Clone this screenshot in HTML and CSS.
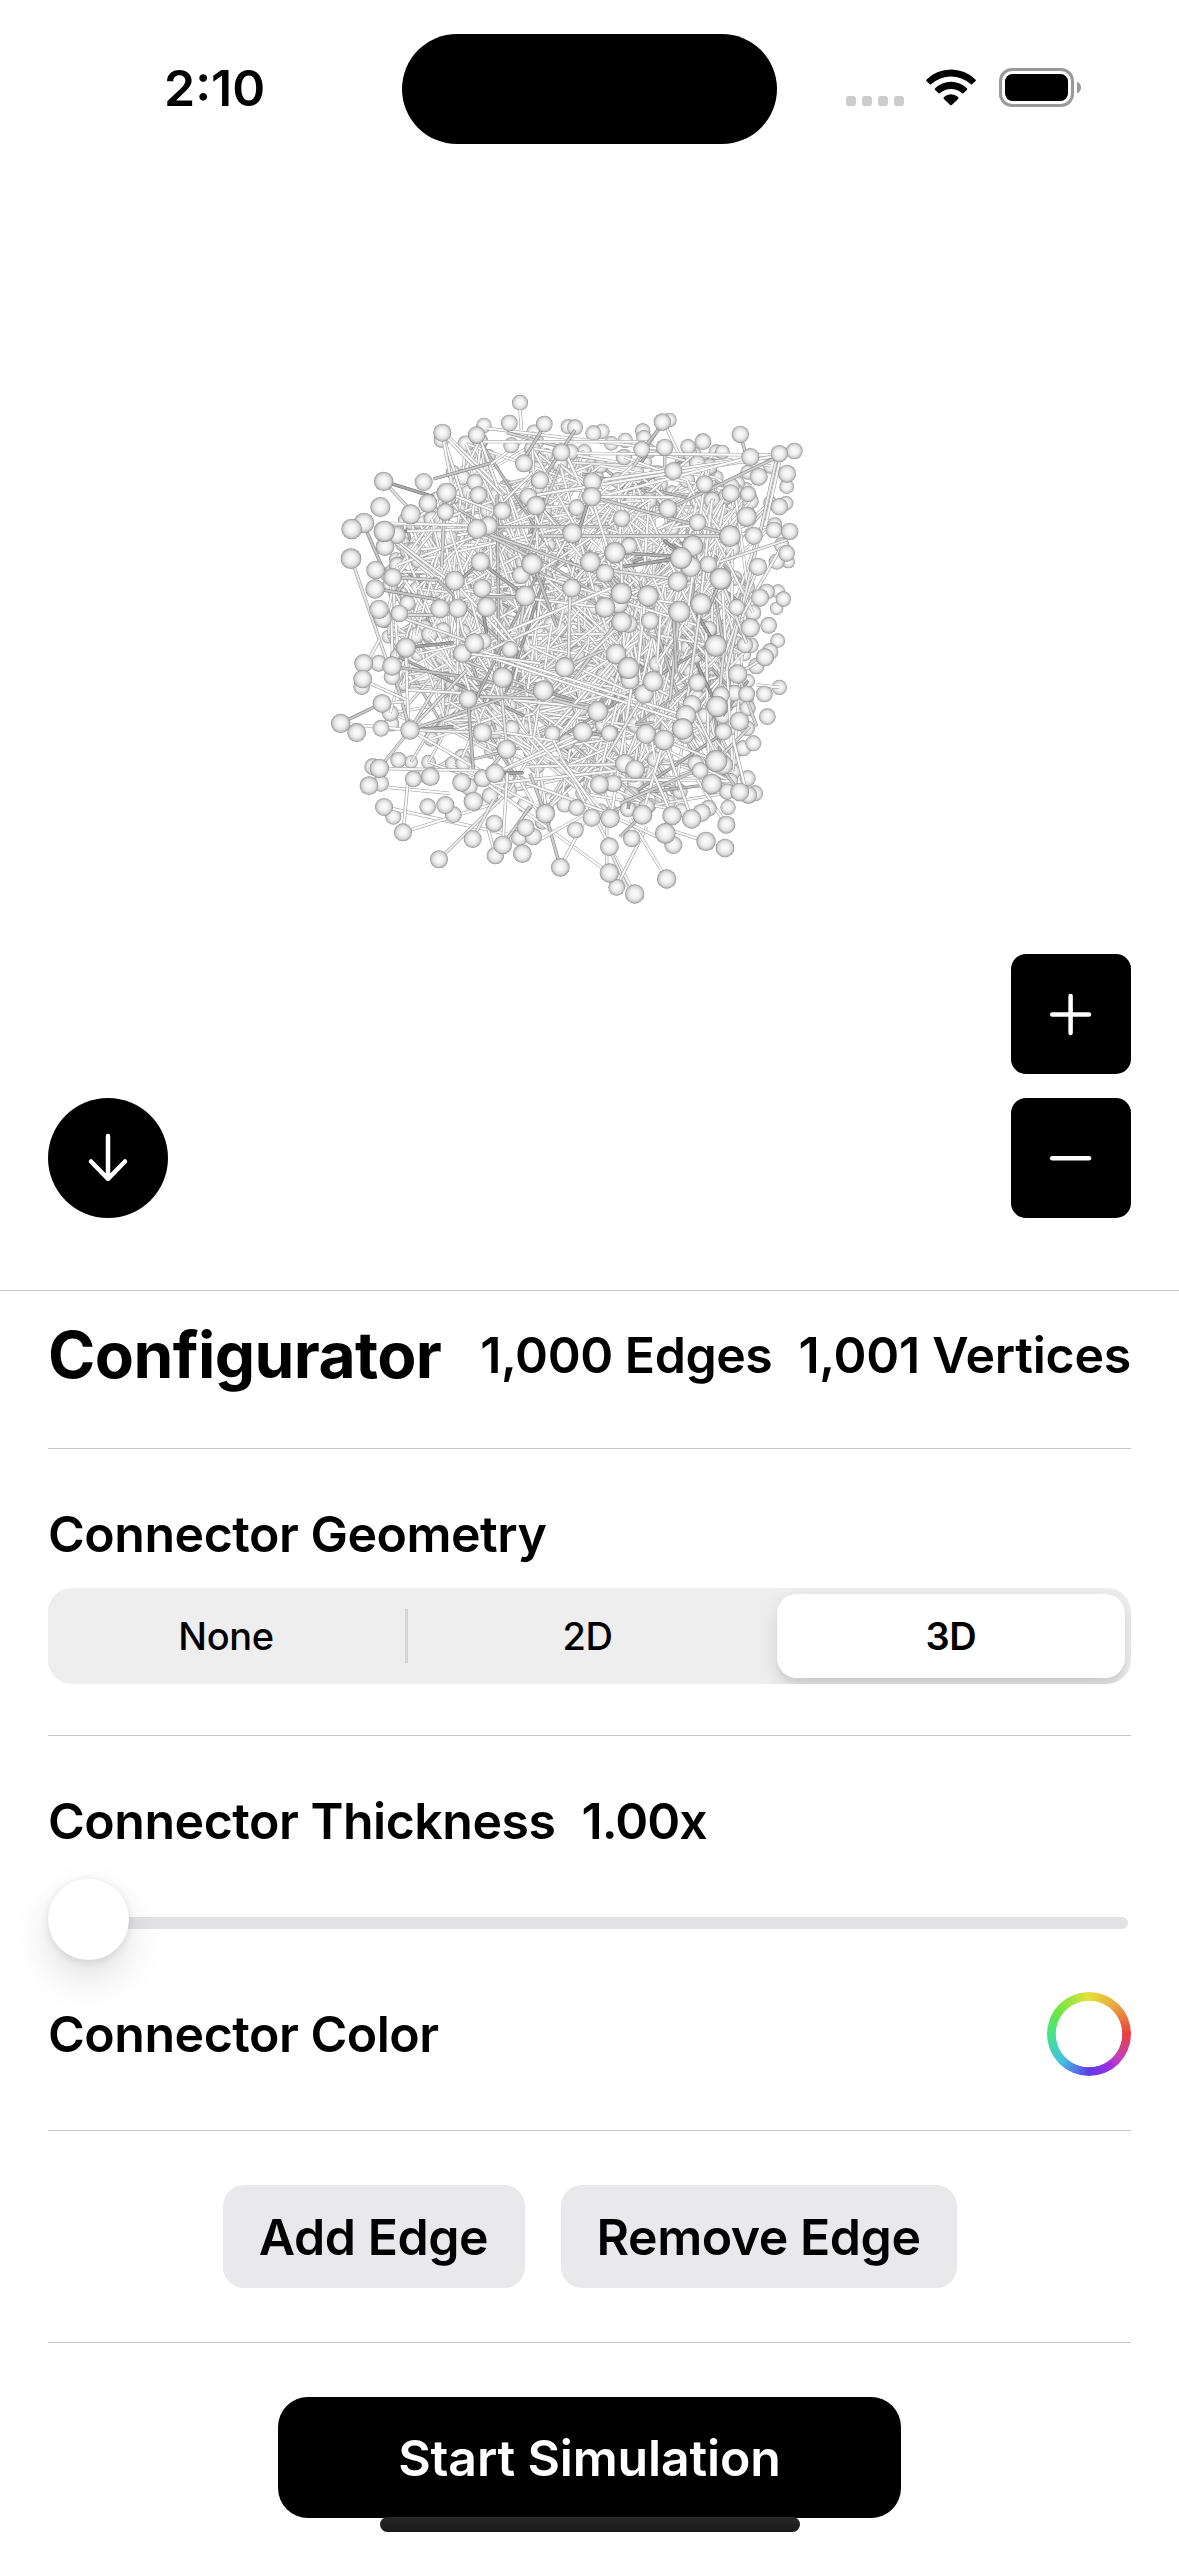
FILE: index.html
```html
<!DOCTYPE html>
<html lang="en">
<head>
<meta charset="utf-8">
<title>Configurator</title>
<link rel="stylesheet" href="styles.css">
</head>
<body>
<header class="status">
  <div class="clock">2:10</div>
  <div class="island"></div>
  <div class="indicators">
    <div class="signal"><i></i><i></i><i></i><i></i></div>
    <svg class="wifi" width="52" height="38" viewBox="0 0 52 38">
      <path d="M1.6 11.4 A35 35 0 0 1 50.4 11.4 Q51.4 12.2 50.6 13 L47.2 16.2 Q46.5 16.8 45.6 16.1 A29 29 0 0 0 6.4 16.1 Q5.5 16.8 4.8 16.2 L1.4 13 Q0.6 12.2 1.6 11.4 Z"/>
      <path d="M10.2 20.2 A22.5 22.5 0 0 1 41.8 20.2 Q42.7 21.1 41.9 21.9 L38.4 25.2 Q37.7 25.8 36.8 25.1 A16.5 16.5 0 0 0 15.2 25.1 Q14.3 25.8 13.6 25.2 L10.1 21.9 Q9.3 21.1 10.2 20.2 Z"/>
      <path d="M19 29 A10.5 10.5 0 0 1 33 29 Q34 30 33.1 30.9 L26.8 37 Q26 37.7 25.2 37 L18.9 30.9 Q18 30 19 29 Z"/>
    </svg>
    <svg class="battery" width="84" height="40" viewBox="0 0 84 40">
      <rect x="1.5" y="1.5" width="72" height="36" rx="11.5" fill="none" stroke="#999" stroke-width="3"/>
      <rect x="6" y="6" width="63" height="27" rx="7.5"/>
      <path d="M78 13.5 Q82 15.5 82 19.5 Q82 23.5 78 25.5 Z" fill="#999"/>
    </svg>
  </div>
</header>

<main class="viewer">
  <canvas class="graph" id="graph" width="500" height="560"></canvas>
  <div class="controls">
    <button class="round" aria-label="Collapse">
      <svg width="120" height="120" viewBox="0 0 120 120"><path d="M60 38 V80.5 M43 63.5 L60 80.8 L77 63.5"/></svg>
    </button>
    <div class="zoom">
      <button class="square" aria-label="Zoom in">
        <svg width="120" height="120" viewBox="0 0 120 120"><path d="M41.2 60.4 H78 M59.6 42 V79"/></svg>
      </button>
      <button class="square" aria-label="Zoom out">
        <svg width="120" height="120" viewBox="0 0 120 120"><path d="M41.2 60.2 H78"/></svg>
      </button>
    </div>
  </div>
</main>

<section class="panel">
  <div class="row title">
    <h1>Configurator</h1>
    <div class="counts"><span class="edge-count">1,000 Edges</span><span class="vertex-count">1,001 Vertices</span></div>
  </div>
  <div class="row geometry">
    <h2>Connector Geometry</h2>
    <div class="segmented">
      <span class="segment">None</span><span class="segment">2D</span><span class="segment selected">3D</span>
    </div>
  </div>
  <div class="row appearance">
    <div class="label"><h2>Connector Thickness</h2><span class="value">1.00x</span></div>
    <div class="slider"><span class="track"></span><span class="thumb"></span></div>
    <div class="color"><h2>Connector Color</h2><span class="well"></span></div>
  </div>
  <div class="row edges">
    <button class="soft add">Add Edge</button>
    <button class="soft remove">Remove Edge</button>
  </div>
  <div class="start-row">
    <button class="start">Start Simulation</button>
    <div class="home"></div>
  </div>
</section>
<script src="graph.js"></script>
</body>
</html>
```
FILE: styles.css
```css
* { box-sizing: border-box; }

body {
  margin: 0;
  width: 1179px;
  height: 2556px;
  overflow: hidden;
  background: #fff;
  color: #000;
  font-family: Inter, "Liberation Sans", sans-serif;
  font-size: 50px;
  font-weight: 600;
  line-height: 60px;
  display: flex;
  flex-direction: column;
}

h1, h2 { margin: 0; font-size: inherit; font-weight: inherit; white-space: nowrap; }
h2 { letter-spacing: -0.48px; }

button {
  border: 0;
  padding: 0;
  font: inherit;
  color: inherit;
  display: flex;
  align-items: center;
  justify-content: center;
}

/* Status bar */
.status {
  height: 177px;
  padding-top: 34px;
  display: grid;
  grid-template-columns: 402px 375px 402px;
  grid-template-rows: 110px;
}
.clock { padding: 24px 0 0 164px; }
.island { background: #000; border-radius: 55px; }
.indicators { display: flex; padding: 34px 0 0 69px; align-items: flex-start; }
.signal { display: flex; gap: 6px; margin: 28px 21px 0 0; }
.signal i { width: 10px; height: 10px; border-radius: 3px; background: #ccc; }
.wifi { margin-right: 22px; }

/* Graph viewer */
.viewer { height: 1113px; padding: 203px 48px 0; display: flex; flex-direction: column; }
.graph { margin-left: 272px; width: 500px; height: 560px; }
.controls { margin-top: 14px; display: flex; justify-content: space-between; align-items: flex-end; }
.zoom { display: flex; flex-direction: column; gap: 24px; }
.round, .square { width: 120px; height: 120px; background: #000; }
.round { border-radius: 50%; }
.square { border-radius: 15px; }
.controls path { fill: none; stroke: #fff; stroke-width: 4.5; stroke-linecap: round; stroke-linejoin: round; }

/* Configurator panel */
.panel { border-top: 1px solid #c6c6c6; padding: 0 48px; }
.row { border-bottom: 1px solid #c6c6c6; }
.title { height: 158px; padding-top: 24px; display: flex; justify-content: space-between; }
h1 { font-size: 64px; font-weight: 700; line-height: 80px; letter-spacing: -0.6px; }
.counts { display: flex; gap: 26px; padding-top: 10px; line-height: 60px; }
.edge-count { letter-spacing: -0.45px; }
.vertex-count { letter-spacing: -0.25px; }
.geometry { height: 287px; padding-top: 55px; }
.segmented {
  height: 96px;
  margin-top: 24px;
  padding: 6px;
  display: grid;
  grid-template-columns: 344px 348px 348px;
  justify-content: space-between;
  border-radius: 24px;
  background: #eee;
  overflow: hidden;
  font-size: 38px;
  font-weight: 500;
  letter-spacing: -0.4px;
}
.segment { display: flex; align-items: center; justify-content: center; position: relative; }
.segment:first-child::after {
  content: "";
  position: absolute;
  right: -10px;
  top: 15px;
  width: 3px;
  height: 54px;
  background: #d5d5d5;
}
.segment.selected {
  background: #fff;
  border-radius: 20px;
  font-weight: 600;
  box-shadow: 0 8px 20px rgba(0,0,0,.12), 0 6px 3px rgba(0,0,0,.04);
}
.appearance { height: 395px; padding-top: 55px; }
.label { display: flex; gap: 26px; }
.value { letter-spacing: -1px; }
.slider { height: 81px; margin-top: 28px; display: flex; align-items: center; position: relative; }
.track { flex: none; width: 1080px; height: 12px; margin-top: 7px; border-radius: 6px; background: #e3e3e5; }
.thumb {
  position: absolute;
  left: 0;
  width: 81px;
  height: 81px;
  border-radius: 50%;
  background: #fff;
  box-shadow: 0 18px 39px rgba(0,0,0,.13), 0 2px 8px rgba(0,0,0,.1);
}
.color { margin-top: 32px; height: 84px; display: flex; justify-content: space-between; align-items: center; }
.well {
  width: 84px;
  height: 84px;
  border-radius: 50%;
  background:
    radial-gradient(circle, #fff 32.8px, transparent 33.6px),
    conic-gradient(#e6e03c, #e8a33e 45deg, #e9403f 90deg, #c23fc0 130deg, #a32fdd 145deg, #5f3de8 180deg, #46c0e0 225deg, #42e58d 270deg, #6ee540 305deg, #a9e53f 335deg, #e6e03c);
}
.edges { height: 212px; display: flex; justify-content: center; align-items: center; gap: 36px; }
.soft { height: 103px; border-radius: 21px; background: #e9e9eb; letter-spacing: -0.45px; }
.add { width: 302px; }
.remove { width: 396px; }
.start-row { padding-top: 54px; display: flex; flex-direction: column; align-items: center; }
.start { width: 623px; height: 121px; border-radius: 30px; background: #000; color: #fff; letter-spacing: -0.15px; }
.home { width: 420px; height: 15px; margin-top: -1px; border-radius: 8px; background: linear-gradient(#282828, #191919); position: relative; }
```
FILE: graph.js
```js
// Draws the vertex/edge cloud. Units are thirds of a pixel.
const ctx = document.getElementById('graph').getContext('2d');
ctx.scale(1 / 3, 1 / 3);
ctx.lineCap = 'butt';

// Outer and front vertices: x, y, radius.
const front = `600 68 24,492 136 23,568 129 25,367 158 27,364 180 23,470 165 26,673 132 25,745 140 23,765 142 24,820 160 24,846 154 23,
1048 120 22,1027 126 26,968 153 23,972 173 23,1149 185 25,1261 163 26,1423 213 25,1378 221 26,1291 231 27,1034 202 26,965 208 25,
724 217 27,752 216 24,574 196 24,612 250 27,916 181 23,874 190 22,1104 200 23,1207 216 22,1110 222 22,191 304 29,311 306 27,428 292 24,
465 307 25,380 338 30,324 370 28,181 381 30,272 403 30,132 429 31,95 447 31,193 454 32,93 536 31,475 345 26,660 301 27,817 305 28,815 350 29,
625 350 27,648 377 29,770 383 25,547 393 27,376 396 26,1060 273 27,1154 312 26,1316 290 27,1401 281 27,1400 320 22,1232 340 27,1284 342 24,
1378 380 26,1398 370 22,1280 410 30,1230 468 32,1301 467 27,1362 450 25,1409 454 26,1044 386 28,1133 427 26,905 415 26,757 460 30,471 447 30,
505 437 28,195 500 28,230 465 27,167 570 28,218 592 28,165 627 29,177 688 29,188 715 28,238 700 26,481 546 29,404 602 30,636 552 32,603 585 27,
811 546 31,885 518 32,855 580 28,927 497 25,1083 534 33,1118 498 32,1112 560 31,1165 553 26,1202 596 33,1073 605 30,1314 560 27,1370 545 24,
1385 495 23,1400 520 25,1405 545 20,616 648 31,486 625 28,500 681 30,413 685 29,360 686 29,755 624 28,904 640 32,855 682 31,895 670 30,
984 648 32,1078 695 33,1143 672 32,905 726 31,926 732 27,990 722 27,1320 653 27,1340 635 24,1374 634 21,1390 657 23,1370 685 20,
1291 743 29,1346 736 25,1187 797 33,1275 795 24,1373 782 22,1335 832 27,1350 815 25,1250 682 25,258 803 30,463 790 30,490 783 25,
570 808 25,427 820 28,888 822 31,131 850 28,176 850 25,216 858 29,128 897 28,125 920 25,186 970 28,62 1030 29,110 1058 28,183 1045 25,
270 1050 29,216 890 25,548 893 31,734 862 30,670 932 31,925 864 33,999 904 31,930 900 28,972 942 29,444 957 28,487 1058 29,560 1108 29,
1132 908 27,1253 882 29,1378 922 23,1333 942 25,1280 942 25,1342 1010 25,1283 985 24,1258 1024 29,1282 1045 23,1203 945 26,1191 979 32,
1116 973 28,1098 1006 31,1088 1047 32,1032 1080 31,978 1062 30,833 994 31,788 1056 30,868 1060 25,697 1061 24,741 1085 24,
178 1165 29,158 1160 25,235 1140 24,147 1217 28,182 1210 25,280 1197 25,331 1190 28,425 1207 28,447 1220 26,488 1195 27,525 1180 29,
192 1281 27,220 1310 24,323 1280 25,376 1275 27,400 1304 25,460 1264 29,249 1357 27,458 1377 27,357 1438 27,526 1427 26,548 1395 28,
523 1330 26,607 1421 28,617 1343 27,598 1373 25,640 1370 26,676 1301 29,721 1462 28,766 1350 25,770 1283 25,838 1213 28,880 1210 26,
914 1151 29,945 1168 29,815 1313 27,870 1315 29,868 1400 28,868 1479 29,890 1522 25,944 1542 29,1040 1497 29,967 1304 30,980 1280 24,
1036 1360 31,1060 1395 27,1056 1307 29,1115 1317 29,1145 1298 27,1165 1285 25,1158 1384 29,1215 1404 28,1219 1334 27,1224 1282 23,
1189 1143 33,1210 1155 29,1175 1212 31,1259 1236 28,1285 1245 26,1305 1240 24,1283 1195 24,1270 1105 24,1300 1090 24,1210 1055 26,
1140 1172 25,850 885 22,430 1150 24,575 1045 24,935 1375 26`.split(',').map(s => s.trim().split(' ').map(Number));

// Long struts in front of the cloud: x1, y1, x2, y2, brightness.
const struts = `600 90 605 160 240,500 145 1030 208 238,560 158 740 205 180,470 185 1000 185 240,672 140 610 240 170,765 150 680 280 170,
370 170 430 360 235,385 170 560 340 240,370 180 395 310 235,480 175 560 400 238,367 160 545 345 240,1027 130 940 260 190,1040 145 1080 230 238,
1030 130 975 200 165,770 220 1380 225 240,1034 205 1034 260 190,735 215 820 400 242,1261 165 1280 230 200,1290 235 850 300 242,1370 228 650 345 238,
1370 232 1050 385 175,1290 232 860 345 242,1370 235 1320 460 225,1380 240 1340 420 235,191 304 340 350 130,191 304 290 410 215,340 297 510 250 165,
380 338 565 410 238,376 340 365 560 190,210 430 470 437 245,505 440 870 440 200,670 468 1230 468 210,815 350 1230 464 178,815 350 1060 352 240,
815 350 870 530 240,805 365 770 470 140,130 430 190 570 165,95 540 210 870 220,193 454 385 600 235,193 460 350 590 225,181 450 260 455 110,
471 450 650 540 205,500 460 850 585 185,640 552 710 740 165,616 648 588 820 195,555 757 870 625 242,660 740 420 850 235,750 650 745 860 225,
975 660 955 850 240,885 518 1083 530 140,910 560 1083 534 130,860 570 1073 598 218,1030 480 1083 520 120,1187 797 1130 700 120,
190 630 360 660 165,177 688 463 790 228,188 705 350 705 195,218 592 350 600 185,258 803 400 788 125,340 590 300 560 235,
480 546 620 650 140,481 546 410 610 140,480 650 620 650 170,400 602 560 780 240,500 681 600 810 235,490 700 500 760 120,
1314 560 1200 860 230,1320 460 1220 870 225,1385 500 1270 700 235,1400 480 1200 545 225,1143 672 1100 970 225,1078 695 1050 960 190,
1060 700 1070 880 170,1202 600 1160 700 165,1202 596 1280 790 225,800 790 640 1000 225,880 740 760 900 190,895 740 700 930 235,
490 815 1088 1005 243,480 822 1088 1025 240,258 803 265 1050 240,420 840 487 1058 238,440 820 660 850 235,540 890 560 1100 220,
215 860 430 890 165,216 860 270 1050 200,128 900 260 960 235,178 780 140 850 235,62 1030 186 970 165,62 1030 270 1050 242,186 970 250 965 235,
270 1050 400 1040 140,270 1050 620 930 180,270 1050 440 870 215,270 1050 360 900 210,270 1050 540 1060 230,270 1050 178 1165 195,270 1050 530 1200 242,
265 930 440 940 235,444 957 460 1170 165,580 960 833 985 235,480 950 650 955 210,734 862 850 810 190,670 932 760 960 140,560 1108 490 1190 205,
525 1180 800 1070 240,525 1180 788 1056 238,788 1056 875 1070 150,525 1180 610 1178 120,525 1210 920 1170 240,620 1160 920 1152 238,
178 1165 480 1172 235,147 1217 390 1240 240,192 1281 560 1362 242,249 1357 540 1265 240,357 1438 550 1250 225,265 1190 250 1350 238,
500 1210 868 1479 245,548 1395 562 1180 238,548 1395 630 1280 200,458 1377 520 1260 225,526 1427 500 1330 235,676 1301 630 1180 200,676 1301 721 1462 175,
721 1462 790 1330 240,640 1390 800 1300 240,700 1080 815 1313 238,640 1070 870 1315 243,720 1130 850 1320 240,938 900 873 1310 242,
620 1210 870 1300 238,860 1315 860 1470 235,830 1320 870 1400 235,868 1400 944 1542 243,870 1410 920 1520 220,980 1340 900 1500 235,
930 1315 1040 1497 242,1032 1080 967 1304 240,1032 1080 1115 1317 235,1032 1080 1189 1143 230,1180 1150 900 1270 180,1189 1143 1259 1236 175,
1290 1040 1189 1143 210,1158 760 1166 1140 238,1130 850 1191 979 120,1253 882 1340 830 225,1253 882 1310 1040 190,1240 1080 1275 1220 240,
1378 922 1310 915 240,1215 780 1195 979 215,1116 973 1190 1130 230,1132 1200 1219 1334 238,1050 1350 1158 1384 235,880 1310 1010 1370 238,
967 1304 900 1370 170,1056 1307 1000 1180 238,833 994 700 960 205,972 942 860 1130 225,950 1060 900 1180 230`.split(',').map(s => s.trim().split(' ').map(Number));

let seed = 7;
const rnd = () => ((seed = (seed * 16807) % 2147483647) / 2147483647);

// Silhouette of the densely packed interior.
const hull = [[420,190],[600,150],[900,185],[1150,200],[1360,240],[1370,500],[1330,760],[1300,950],[1240,1230],[1130,1290],[900,1310],[640,1330],[440,1270],[260,1220],[210,1100],[190,800],[195,560],[230,430],[340,340]];
const inside = (x, y) => {
  let c = false;
  for (let i = 0, j = hull.length - 1; i < hull.length; j = i++) {
    const [xi, yi] = hull[i], [xj, yj] = hull[j];
    if ((yi > y) !== (yj > y) && x < (xj - xi) * (y - yi) / (yj - yi) + xi) c = !c;
  }
  return c;
};

const nodes = [];
while (nodes.length < 480) {
  const x = 130 + rnd() * 1290, y = 130 + rnd() * 1240;
  if (inside(x, y)) nodes.push([x, y, 20 + rnd() * 5]);
}

const items = [];
const strut = (x1, y1, x2, y2, z, tone, w) => items.push({ z, tone, w, p: [x1, y1, x2, y2] });

for (let i = 0; i < 1500; i++) {
  const a = nodes[Math.floor(rnd() * nodes.length)], b = nodes[Math.floor(rnd() * nodes.length)];
  const d = Math.hypot(a[0] - b[0], a[1] - b[1]);
  if (d > 560) continue;
  const z = (a[2] + b[2]) / 2 + rnd() * 2 - 1;
  // Struts deeper in the cloud are slightly darker.
  const tone = rnd() < 0.12 ? 165 + rnd() * 45 : Math.min(246, 212 + (z - 20) * 9);
  strut(a[0], a[1], b[0], b[1], z, tone, 8);
}
for (const [x1, y1, x2, y2, tone] of struts) strut(x1, y1, x2, y2, 25.6, tone < 200 ? 130 + (tone - 100) * 0.75 + 10 : tone, 9);
for (const n of nodes) items.push({ z: n[2] - 1.2, ball: n });
for (const n of front) items.push({ z: n[2] + 1, ball: n });
items.sort((a, b) => a.z - b.z);

const grey = v => `rgb(${v | 0},${v | 0},${v | 0})`;
for (const it of items) {
  if (it.ball) {
    const [x, y, r] = it.ball;
    const g = ctx.createRadialGradient(x, y - r * 0.05, 0, x, y, r);
    g.addColorStop(0, '#fcfcfc');
    g.addColorStop(0.4, '#f3f3f3');
    g.addColorStop(0.7, '#dedede');
    g.addColorStop(0.88, '#bebebe');
    g.addColorStop(1, '#858585');
    ctx.fillStyle = g;
    ctx.beginPath();
    ctx.arc(x, y, r, 0, 7);
    ctx.fill();
  } else {
    const [x1, y1, x2, y2] = it.p;
    for (const [w, v] of [[it.w + 1, it.tone * 0.67], [it.w - 2, it.tone * 0.96], [it.w * 0.5, it.tone * 1.06]]) {
      ctx.strokeStyle = grey(Math.min(254, v));
      ctx.lineWidth = w;
      ctx.beginPath();
      ctx.moveTo(x1, y1);
      ctx.lineTo(x2, y2);
      ctx.stroke();
    }
  }
}
```
